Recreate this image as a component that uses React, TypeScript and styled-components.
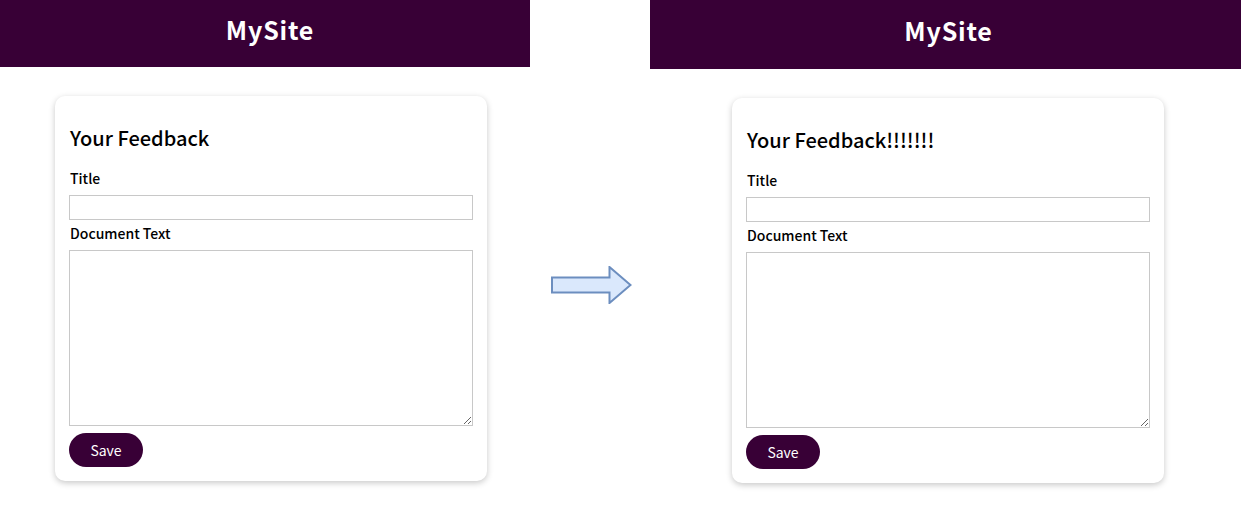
import styled, { createGlobalStyle } from "styled-components";

const purple = "#380036";
const fontStack = `"Noto Sans CJK KR", "Noto Sans", sans-serif`;

const GlobalStyle = createGlobalStyle`
  html, body {
    margin: 0;
    padding: 0;
    background: #ffffff;
    font-family: ${fontStack};
  }
`;

const Page = styled.div`
  display: flex;
  width: 1241px;
  height: 516px;
  overflow: hidden;
`;

const Shot = styled.div<{ $width: number }>`
  width: ${(p) => p.$width}px;
  flex: none;
`;

const Header = styled.header<{ $height: number; $shift: number }>`
  height: ${(p) => p.$height}px;
  background: ${purple};
  color: #fff;
  display: flex;
  align-items: center;
  justify-content: center;
  padding: 0 0 10px ${(p) => p.$shift}px;
  box-sizing: border-box;
  font-size: 25px;
  letter-spacing: 0.8px;
  font-weight: 700;
`;

const Body = styled.div<{ $left: number; $top: number }>`
  padding-left: ${(p) => p.$left}px;
  padding-top: ${(p) => p.$top}px;
`;

const Card = styled.div`
  width: 432px;
  box-sizing: border-box;
  background: #fff;
  border-radius: 10px;
  box-shadow: 0 2px 6px rgba(0, 0, 0, 0.22);
  padding: 27px 14px 14px 14px;
  display: flex;
  flex-direction: column;
`;

const Heading = styled.h2`
  margin: 0 0 17px 1px;
  font-size: 20px;
  font-weight: 500;
  color: #000;
  line-height: 30px;
`;

const Label = styled.label`
  font-size: 14px;
  font-weight: 500;
  color: #000;
  margin: 0 0 9px 1px;
  line-height: 16px;
`;

const TextInput = styled.input`
  width: 404px;
  height: 25px;
  box-sizing: border-box;
  border: 1px solid #c8c8c8;
  margin: 0 0 5px 0;
  padding: 2px 4px;
  outline: none;
`;

const TextArea = styled.textarea`
  width: 404px;
  height: 176px;
  box-sizing: border-box;
  border: 1px solid #c8c8c8;
  margin: 0 0 7px 0;
  padding: 2px 4px;
  font-family: ${fontStack};
  outline: none;
  display: block;
`;

const SaveButton = styled.button`
  width: 74px;
  height: 34px;
  border: none;
  border-radius: 17px;
  background: ${purple};
  color: #fff;
  font-family: ${fontStack};
  font-size: 14px;
  cursor: pointer;
`;

const ArrowZone = styled.div`
  width: 120px;
  flex: none;
  display: flex;
  align-items: flex-start;
  padding-top: 266px;
  padding-left: 21px;
  box-sizing: border-box;
`;

function FeedbackShot({
  width,
  headerHeight,
  textShift,
  cardLeft,
  cardTop,
  title,
}: {
  width: number;
  headerHeight: number;
  textShift: number;
  cardLeft: number;
  cardTop: number;
  title: string;
}) {
  return (
    <Shot $width={width}>
      <Header $height={headerHeight} $shift={textShift}>
        MySite
      </Header>
      <Body $left={cardLeft} $top={cardTop}>
        <Card>
          <Heading>{title}</Heading>
          <Label>Title</Label>
          <TextInput />
          <Label>Document Text</Label>
          <TextArea />
          <div>
            <SaveButton>Save</SaveButton>
          </div>
        </Card>
      </Body>
    </Shot>
  );
}

export default function App() {
  return (
    <>
      <GlobalStyle />
      <Page>
        <FeedbackShot
          width={530}
          headerHeight={67}
          textShift={10}
          cardLeft={55}
          cardTop={29}
          title="Your Feedback"
        />
        <ArrowZone>
          <svg width="81" height="38" viewBox="0 0 81 38">
            <path
              d="M1 11.5 H58.5 V1 L79.5 19 L58.5 37 V26.5 H1 Z"
              fill="#dae8fc"
              stroke="#6c8ebf"
              strokeWidth="2"
            />
          </svg>
        </ArrowZone>
        <FeedbackShot
          width={591}
          headerHeight={69}
          textShift={6}
          cardLeft={82}
          cardTop={29}
          title="Your Feedback!!!!!!!"
        />
      </Page>
    </>
  );
}
